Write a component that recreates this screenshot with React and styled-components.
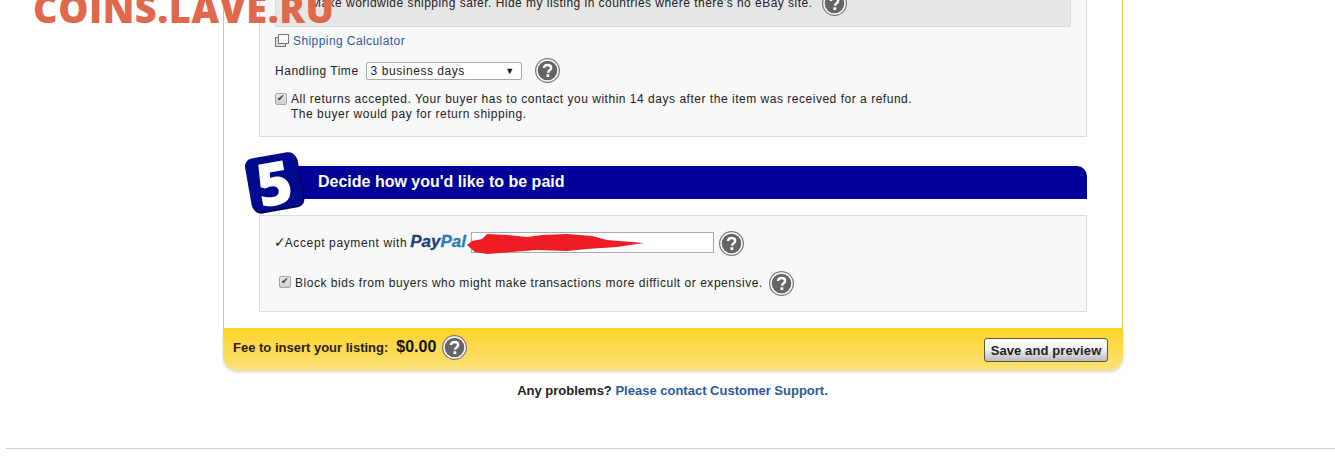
import React from 'react';
import styled, { createGlobalStyle } from 'styled-components';

const GlobalStyle = createGlobalStyle`
  html, body {
    margin: 0;
    padding: 0;
    background: #fff;
    font-family: "Liberation Sans", Arial, sans-serif;
    font-size: 12px;
    color: #222;
  }
`;

const Page = styled.div`
  position: relative;
  height: 471px;
  overflow: hidden;
`;

const Watermark = styled.div`
  position: absolute;
  left: 33px;
  top: -14px;
  font-family: "Open Sans", sans-serif;
  font-weight: 800;
  font-size: 38px;
  line-height: 44px;
  letter-spacing: 0.5px;
  color: #e0684d;
  z-index: 5;
`;

const Card = styled.div`
  width: 900px;
  margin: -14px 0 0 223px;
`;

const CardBody = styled.div`
  padding: 0 35px 16px;
  border-left: 1px solid #e8c54a;
  border-right: 1px solid #e0c44a;
`;

const Panel = styled.div`
  background: #f8f8f8;
  border: 1px solid #dcdcdc;
  border-top: ${p => (p.$cutTop ? 'none' : '1px solid #dcdcdc')};
  padding: 0 15px;
  height: ${p => p.$height}px;
  box-sizing: border-box;
`;

const NoticeBox = styled.div`
  display: flex;
  align-items: center;
  height: 41px;
  box-sizing: border-box;
  padding: 0 0 6px 35px;
  background: #e6e6e6;
  border: 1px solid #d8d8d8;
  border-top: none;
  font-size: 12px;
  letter-spacing: 0.47px;
`;

const Row = styled.div`
  display: flex;
  align-items: center;
  gap: ${p => p.$gap || 0}px;
  margin-top: ${p => p.$top || 0}px;
  padding-left: ${p => p.$left || 0}px;
  letter-spacing: 0.53px;
`;

const RowText = styled.span`
  margin-bottom: 2px;
`;

const AcceptText = styled.span`
  margin-bottom: 4px;
  letter-spacing: 0.62px;
`;

const Link = styled.a`
  color: #2a5a9c;
  text-decoration: none;
`;

const CalculatorLink = styled(Link)`
  margin-left: 3px;
  letter-spacing: 0.42px;
`;

const SelectBox = styled.div`
  width: 156px;
  height: 18px;
  box-sizing: border-box;
  display: flex;
  align-items: center;
  justify-content: space-between;
  padding: 0 6px 0 4px;
  background: #fff;
  border: 1px solid #a8a8a8;
  border-radius: 2px;
  letter-spacing: 0.55px;
`;

const Arrow = styled.span`
  font-size: 9px;
  color: #111;
`;

const Check = styled.input`
  appearance: none;
  position: relative;
  width: 12px;
  height: 12px;
  margin: 0;
  flex: none;
  box-sizing: border-box;
  background: linear-gradient(#e8e8e8, #cfcfcf);
  border: 1px solid #a5a5a5;
  border-radius: 2px;

  &::after {
    content: "✔";
    position: absolute;
    left: 1px;
    top: -1px;
    font-family: "DejaVu Sans", sans-serif;
    font-size: 9px;
    line-height: 11px;
    color: #333;
  }
`;

const RaisedCheck = styled(Check)`
  margin-bottom: 3px;
`;

const ReturnsRow = styled.div`
  display: flex;
  gap: 4px;
  margin-top: 9px;
  line-height: 15px;
  letter-spacing: 0.52px;
`;

const CheckCell = styled.div`
  padding-top: 1px;
`;

const SectionHead = styled.div`
  position: relative;
  height: 33px;
  margin: 29px 0 16px 0;
  display: flex;
  align-items: center;
  box-sizing: border-box;
  padding: 0 0 1px 59px;
  background: #000099;
  border-radius: 0 10px 0 0;
  color: #fff;
  font-size: 16px;
  font-weight: 700;
`;

const StepBadge = styled.div`
  position: absolute;
  left: -11px;
  top: -11px;
  width: 52px;
  height: 54px;
  display: flex;
  align-items: center;
  justify-content: center;
  background: #000a8c;
  border-radius: 8px;
  transform: rotate(-10deg);
  box-shadow: 1px 2px 0 #00005c;
  font-family: "Open Sans", sans-serif;
  font-size: 60px;
  font-weight: 800;
  line-height: 1;
  color: #fff;
`;

const Tick = styled.span`
  font-family: "DejaVu Sans", sans-serif;
  font-size: 14px;
  letter-spacing: 0;
  margin-left: -1px;
  margin-right: -1px;
`;

const PayPal = styled.span`
  margin-left: 3px;
  font-size: 17px;
  font-weight: 700;
  font-style: italic;
  letter-spacing: 0;
  color: #1d3f80;
  -webkit-text-stroke: 0.3px currentColor;
  transform: translateY(-2px);
`;

const PayPalLight = styled.span`
  color: #2a7ab8;
`;

const EmailWrap = styled.div`
  position: relative;
  margin-left: 5px;
  transform: translateY(-1px);
`;

const EmailInput = styled.div`
  width: 243px;
  height: 21px;
  box-sizing: border-box;
  background: #fff;
  border: 1px solid #aaa;
`;

const Scribble = styled.svg`
  position: absolute;
  left: -4px;
  top: -1px;
`;

const FooterBar = styled.div`
  display: flex;
  align-items: center;
  height: 42px;
  padding: 0 15px 0 10px;
  background: linear-gradient(#fed327, #fde17a);
  border-radius: 0 0 14px 14px;
  box-shadow: 0 2px 3px rgba(120, 110, 70, 0.3);
`;

const FeeGroup = styled.div`
  display: flex;
  align-items: center;
  margin-bottom: 3px;
`;

const FeeLabel = styled.span`
  font-size: 13px;
  font-weight: 700;
  color: #2b2010;
`;

const FeeValue = styled.span`
  margin: -2px 6px 0 8px;
  font-size: 16px;
  font-weight: 700;
  color: #111;
`;

const SaveButton = styled.button`
  margin: 2px 0 0 auto;
  width: 124px;
  height: 24px;
  padding: 0;
  background: linear-gradient(#fff, #f3f3f3 45%, #b9b9b9);
  border: 1px solid #5c5540;
  border-radius: 3px;
  font-family: "Liberation Sans", Arial, sans-serif;
  font-size: 13px;
  font-weight: 700;
  letter-spacing: 0.1px;
  color: #222;
`;

const Problems = styled.div`
  margin-top: 13px;
  text-align: center;
  font-size: 13px;
  font-weight: 700;
  line-height: 16px;
  color: #222;
  width: 1345px;
`;

const Rule = styled.hr`
  margin: 49px 0 0 6px;
  border: none;
  border-top: 1px solid #cfcfcf;
`;

const HelpSvg = styled.svg`
  flex: none;
  margin-left: ${p => p.$left || 0}px;
`;

function Help({ left, size = 25 }) {
  return (
    <HelpSvg $left={left} width={size} height={size} viewBox="0 0 24 24">
      <circle cx="12" cy="12" r="11.4" fill="#fff" stroke="#777" strokeWidth="1.2" />
      <circle cx="12" cy="12" r="9.4" fill="#646464" />
      <path
        d="M8.6 9.6c.2-2 1.6-3 3.5-3 2 0 3.4 1.1 3.4 2.8 0 1.3-.7 2-1.7 2.6-.8.5-1.1.9-1.1 1.8v.4"
        fill="none"
        stroke="#fff"
        strokeWidth="2.4"
      />
      <rect x="11" y="15.6" width="2.7" height="2.7" fill="#fff" />
    </HelpSvg>
  );
}

function CalculatorIcon() {
  return (
    <svg width="15" height="14" viewBox="0 0 15 14">
      <rect x="0.5" y="3.5" width="10" height="9" fill="#ddd" stroke="#777" />
      <rect x="3.5" y="0.5" width="10" height="9" fill="#f8f8f8" stroke="#777" />
    </svg>
  );
}

export default function App() {
  return (
    <Page>
      <GlobalStyle />
      <Watermark>COINS.LAVE.RU</Watermark>
      <Card>
        <CardBody>
          <Panel $cutTop $height={151}>
            <NoticeBox>
              Make worldwide shipping safer. Hide my listing in countries where there's no eBay site.
              <Help left={10} />
            </NoticeBox>
            <Row $top={7}>
              <CalculatorIcon />
              <CalculatorLink>Shipping Calculator</CalculatorLink>
            </Row>
            <Row $top={10} $gap={7}>
              Handling Time
              <SelectBox>
                3 business days
                <Arrow>▼</Arrow>
              </SelectBox>
              <Help left={6} />
            </Row>
            <ReturnsRow>
              <CheckCell>
                <Check type="checkbox" checked readOnly />
              </CheckCell>
              <div>
                All returns accepted. Your buyer has to contact you within 14 days after the item was received for a refund.
                <br />
                The buyer would pay for return shipping.
              </div>
            </ReturnsRow>
          </Panel>

          <SectionHead>
            <StepBadge>5</StepBadge>
            Decide how you'd like to be paid
          </SectionHead>

          <Panel $height={97}>
            <Row $top={15}>
              <AcceptText>
                <Tick>✓</Tick>Accept payment with
              </AcceptText>
              <PayPal>
                Pay<PayPalLight>Pal</PayPalLight>
              </PayPal>
              <EmailWrap>
                <EmailInput />
                <Scribble width="180" height="26" viewBox="0 0 180 26">
                  <path
                    d="M0 14 L5 10 L15 8 L20 3 L40 4 L60 6 L75 4 L100 3 L125 5 L140 9 L177 12 L150 16 L120 18 L100 20 L70 19 L45 21 L20 23 L8 21 Z"
                    fill="#ee1c25"
                  />
                </Scribble>
              </EmailWrap>
              <Help left={5} />
            </Row>
            <Row $top={15} $left={4} $gap={4}>
              <RaisedCheck type="checkbox" checked readOnly />
              <RowText>Block bids from buyers who might make transactions more difficult or expensive.</RowText>
              <Help left={2} />
            </Row>
          </Panel>
        </CardBody>
        <FooterBar>
          <FeeGroup>
            <FeeLabel>Fee to insert your listing:</FeeLabel>
            <FeeValue>$0.00</FeeValue>
            <Help />
          </FeeGroup>
          <SaveButton>Save and preview</SaveButton>
        </FooterBar>
      </Card>
      <Problems>
        Any problems? <Link>Please contact Customer Support.</Link>
      </Problems>
      <Rule />
    </Page>
  );
}
